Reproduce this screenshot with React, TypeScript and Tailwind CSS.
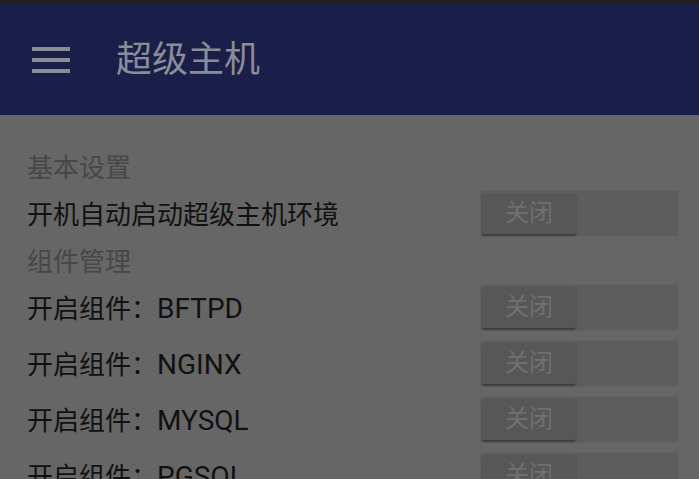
const rows = ["BFTPD", "NGINX", "MYSQL", "PGSQL", "REDIS"];

function Toggle() {
  return (
    <div className="flex h-[47px] w-[199px] shrink-0 items-start rounded-[2px] border border-[#626262] bg-[#5d5d5d] pl-[1px] pt-[2px]">
      <div className="flex h-[41px] w-[94px] items-center justify-center rounded-[2px] bg-[#575757] text-[24px] text-[#707070] shadow-[0_2px_2px_rgba(0,0,0,0.35)]">
        关闭
      </div>
    </div>
  );
}

function Row({ label, name }: { label: string; name?: string }) {
  return (
    <div className="flex h-[56px] items-center justify-between pl-[27px] pr-[20px]">
      <span className="pt-[3px] text-[26px] leading-none text-[#111111]">
        {label}
        {name && <span className="text-[28px] leading-none">{name}</span>}
      </span>
      <Toggle />
    </div>
  );
}

function Section({ title }: { title: string }) {
  return (
    <div className="flex h-[38px] items-center pl-[27px] pt-[3px] text-[26px] leading-none text-[#474747]">
      {title}
    </div>
  );
}

export default function App() {
  return (
    <div
      className="h-[479px] w-full overflow-hidden bg-[#666666]"
      style={{ fontFamily: 'Roboto, "Noto Sans CJK SC", sans-serif' }}
    >
      <div className="h-[4px] bg-[#202020]" />
      {/* toolbar */}
      <div className="flex h-[111px] items-center bg-[#1a1f49]">
        <div className="ml-[32px] flex w-[38px] flex-col gap-[7px]">
          <span className="h-[4px] bg-[#8a8c97]" />
          <span className="h-[4px] bg-[#8a8c97]" />
          <span className="h-[4px] bg-[#8a8c97]" />
        </div>
        <h1 className="ml-[46px] text-[36px] leading-none text-[#8a8c97]">超级主机</h1>
      </div>

      <div className="pt-[32px]">
        <Section title="基本设置" />
        <Row label="开机自动启动超级主机环境" />
        <Section title="组件管理" />
        {rows.map((r) => (
          <Row key={r} label="开启组件：" name={r} />
        ))}
      </div>
    </div>
  );
}
